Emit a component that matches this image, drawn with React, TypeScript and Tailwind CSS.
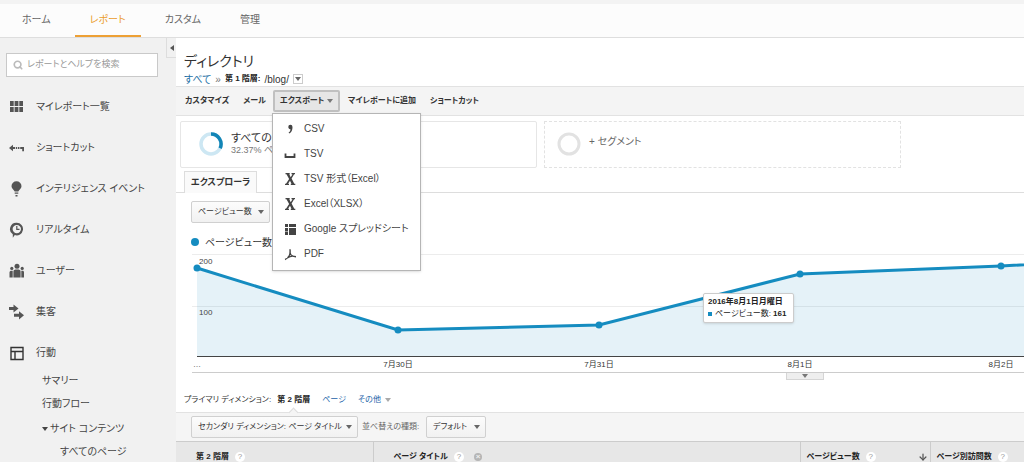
import type { ReactNode } from "react";
import clsx from "clsx";
import { ArrowDown, Search } from "lucide-react";

const tabs = ["ホーム", "レポート", "カスタム", "管理"];

const points = [
  { x: 21, y: 18, label: "…" },
  { x: 222, y: 80, label: "7月30日" },
  { x: 423, y: 75, label: "7月31日" },
  { x: 624, y: 24, label: "8月1日" },
  { x: 825, y: 16, label: "8月2日" },
  { x: 1026, y: 5 },
];

const BASELINE = 106;

function Caret({ className }: { className?: string }) {
  return (
    <svg viewBox="0 0 6 4" className={clsx("h-1 w-1.5 shrink-0", className)} fill="currentColor">
      <path d="M0 0h6L3 4z" />
    </svg>
  );
}

function Icon({ children }: { children: ReactNode }) {
  return (
    <svg viewBox="0 0 16 16" className="h-4 w-4 shrink-0" fill="currentColor">
      {children}
    </svg>
  );
}

const menu = [
  {
    label: "マイレポート一覧",
    icon: <path d="M2 2h3.700v5H2zM6.600 2h3.800v5H6.600zM11.300 2H15v5h-3.700zM2 8h3.700v5H2zM6.600 8h3.800v5H6.600zM11.300 8H15v5h-3.700z" />,
  },
  {
    label: "ショートカット",
    icon: <path d="M1 8 5 4.700V7h2v2H5v2.300zM7.800 7h1.400v2H7.800zM10 7h1.400v2H10zM12.200 7H16v4.200h-1.800V9h-2z" />,
  },
  {
    label: "インテリジェンス イベント",
    icon: (
      <path d="M8.500 .3a5 5 0 0 1 5 5c0 2.300-2.300 3.500-3.200 5.200H6.700C5.800 8.800 3.500 7.600 3.500 5.300a5 5 0 0 1 5-5zM6.700 11.500h3.600v1.300H6.700zM7.500 14h2v1.600h-2z" />
    ),
  },
  {
    label: "リアルタイム",
    icon: (
      <>
        <path
          fillRule="evenodd"
          d="M8.800.8a6.300 6.300 0 1 1-2 12.300L4.800 15.800V12.300A6.300 6.300 0 0 1 8.800.8zm0 2.100a4.200 4.200 0 1 0 0 8.400 4.200 4.200 0 0 0 0-8.400z"
        />
        <path d="M8.800 4v3.400h2.700" fill="none" stroke="currentColor" strokeWidth="1.200" />
      </>
    ),
  },
  {
    label: "ユーザー",
    icon: (
      <>
        <circle cx="9" cy="3.300" r="2.500" />
        <circle cx="3.800" cy="5.400" r="1.600" />
        <circle cx="14.200" cy="5.400" r="1.600" />
        <path d="M5.400 14.500V8.500c0-1.400 1.100-2 3.600-2s3.600.6 3.600 2v6zM1.500 14.500V9.500c0-1.200.8-1.700 2-1.700h1.200v6.700zM16 14.500V9.500c0-1.200-.5-1.700-1.500-1.700h-1.200v6.700z" />
      </>
    ),
  },
  {
    label: "集客",
    icon: <path d="M1 3h4.500V.4l5 4.100-5 4.100V6H1zM6 9.800h5V7.200l5 4.100-5 4.100v-2.600H6z" />,
  },
  {
    label: "行動",
    icon: <path d="M3 2.500h12v12H3zM3 6.500h12M7 6.500v8" fill="none" stroke="#333" strokeWidth="1.400" />,
  },
];

const excelIcon = (
  <path d="M3.500 2h4.200v1.200H7.300L8.700 6.200 10.500 3.200H9.500V2H13v1.200h-.9L9.600 7.600l2.700 5.200h1V14H8.800v-1.200h.7L8 9.700l-2 3.100h1V14H3v-1.200h1l3.100-4.700-2.600-4.900h-1z" />
);

const exports = [
  {
    label: "CSV",
    icon: <path d="M6.300 6a2.100 2.100 0 1 1 4.200-.1c.1 3-1 5.300-3.300 6.600l-.6-.9c1.300-.9 1.800-2 1.900-3.400C7.200 8.300 6.300 7.300 6.300 6z" />,
  },
  {
    label: "TSV",
    icon: <path d="M3.500 7.500V11h9V7.500" fill="none" stroke="currentColor" strokeWidth="1.800" />,
  },
  { label: "TSV 形式（Excel）", icon: excelIcon },
  { label: "Excel（XLSX）", icon: excelIcon },
  {
    label: "Google スプレッドシート",
    icon: <path d="M3 3h3v3H3zM7 3h7v3H7zM3 7h3v3.500H3zM7 7h7v3.500H7zM3 11h3v3H3zM7 10.500h7V14H7z" />,
  },
  {
    label: "PDF",
    icon: (
      <path
        d="M8 3.200C8.300 6 8 8 7.500 9.300M8.100 6.500C8.300 9 11 10.700 14 10.800M7.500 9.300C6.500 11.300 4.800 13 3 13.500M5.300 11.900C7.500 10.500 9.500 10 11.500 10.200"
        fill="none"
        stroke="currentColor"
        strokeWidth="1.400"
      />
    ),
  },
];

function Header() {
  return (
    <header className="border-t-4 border-b border-t-[#f3f3f3] border-b-[#dedede] bg-[#fcfcfc]">
      <nav className="flex h-[33px] gap-[9px] pl-[7px]">
        {tabs.map((tab) => (
          <a
            key={tab}
            href="#"
            className={clsx(
              "flex items-center border-b-2 px-[15px] text-[10px]",
              tab === "レポート" ? "border-[#eda035] text-[#eb9d2c]" : "border-transparent text-[#666]"
            )}
          >
            {tab}
          </a>
        ))}
      </nav>
    </header>
  );
}

function Sidebar() {
  return (
    <aside className="w-44 shrink-0 bg-[#f1f1f1]">
      <div className="flex justify-between pl-1.5">
        <label className="mt-[15px] flex h-6 w-[152px] items-center gap-1 border border-[#c9c9c9] bg-white pl-1.5">
          <Search size={10} strokeWidth={4} className="shrink-0 text-[#bbb]" />
          <input
            type="search"
            aria-label="検索"
            placeholder="レポートとヘルプを検索"
            className="w-full min-w-0 text-[9px] outline-none placeholder:text-[#999]"
          />
        </label>
        <button
          aria-label="閉じる"
          className="flex h-5 w-2.5 items-center justify-center border border-t-0 border-r-0 border-[#ddd] text-[#555]"
        >
          <Caret className="rotate-90" />
        </button>
      </div>
      <ul className="mt-[9px]">
        {menu.map((item) => (
          <li key={item.label}>
            <a href="#" className="flex h-[41px] items-center gap-3 pl-2 text-[10px] text-[#444]">
              <span className="text-[#555]">
                <Icon>{item.icon}</Icon>
              </span>
              {item.label}
            </a>
          </li>
        ))}
      </ul>
      <ul className="-mt-1 text-[10px] leading-[23px] text-[#444]">
        <li className="pl-[42px]">
          <a href="#">サマリー</a>
        </li>
        <li className="pl-[42px]">
          <a href="#">行動フロー</a>
        </li>
        <li className="pt-0.5 pl-[42px]">
          <a href="#" className="flex items-center gap-0.5">
            <Caret />
            サイト コンテンツ
          </a>
        </li>
        <li className="pl-[60px]">
          <a href="#">すべてのページ</a>
        </li>
      </ul>
    </aside>
  );
}

function Toolbar() {
  return (
    <div className="flex h-[30px] items-center border-y border-[#e2e2e2] bg-[#f4f4f4] pl-[9px] text-[8px] font-bold whitespace-nowrap text-[#333]">
      <button className="mr-3.5">カスタマイズ</button>
      <button className="mr-[7px]">メール</button>
      <div className="relative">
        <button className="flex h-[22px] w-[67px] items-center justify-between rounded-xs border-2 border-[#c0c0c0] bg-[#e6e6e6] px-[5px]">
          エクスポート
          <Caret className="text-[#777]" />
        </button>
        <ul className="absolute top-full -left-px z-10 mt-px w-[149px] border border-[#b5b5b5] bg-white pt-0.5 pb-1 font-normal shadow-sm">
          {exports.map((item) => (
            <li key={item.label}>
              <button className="flex h-[25px] w-full items-center gap-1.5 pl-[9px] text-[10px] text-[#444]">
                <Icon>{item.icon}</Icon>
                {item.label}
              </button>
            </li>
          ))}
        </ul>
      </div>
      <button className="ml-2">マイレポートに追加</button>
      <button className="ml-3.5">ショートカット</button>
    </div>
  );
}

function Segments() {
  return (
    <div className="flex gap-[7px] pt-[5px] pl-1">
      <div className="flex h-[47px] w-[357px] gap-2 rounded-xs border border-[#e6e6e6] pt-2.5 pl-[18px]">
        <svg viewBox="0 0 24 24" className="h-6 w-6" fill="none" strokeWidth="3.500">
          <circle cx="12" cy="12" r="10" stroke="#cde7f3" />
          <path d="M12 2a10 10 0 0 1 9.100 14.200" stroke="#1285b6" />
        </svg>
        <div>
          <p className="text-[11px] leading-3 text-[#333]">すべての</p>
          <p className="text-[9px] leading-3 text-[#777]">32.37% ペー</p>
        </div>
      </div>
      <button className="flex h-[47px] w-[357px] gap-2 border border-dashed border-[#e2e2e2] pt-2.5 pl-3 text-[10px] text-[#666]">
        <svg viewBox="0 0 24 24" className="h-6 w-6" fill="none">
          <circle cx="12" cy="12" r="10" stroke="#e2e2e2" strokeWidth="3" />
        </svg>
        <span className="leading-5">+ セグメント</span>
      </button>
    </div>
  );
}

function Select({ id, label, value, className }: { id: string; label?: string; value: string; className: string }) {
  return (
    <div className={clsx("relative", className)}>
      <select
        id={id}
        aria-label={label}
        className="block h-[22px] w-full appearance-none rounded-xs border border-[#d0d0d0] bg-linear-to-b from-[#fcfcfc] to-[#f1f1f1] pl-1.5 text-[8px] text-[#333]"
      >
        <option>{value}</option>
      </select>
      <Caret className="pointer-events-none absolute top-[9px] right-1.5 text-[#666]" />
    </div>
  );
}

function Chart() {
  const line = points.map((p) => `${p.x},${p.y}`).join(" ");

  return (
    <div className="relative">
      <svg className="block h-[122px] w-full text-[8px]">
        <path d="M16 4.500H2000M16 56.500H2000" stroke="#ececec" />
        <polygon points={`21,${BASELINE} ${line} 1026,${BASELINE}`} fill="#0f86bd" fillOpacity="0.110" />
        <path d="M21 106.500H2000" stroke="#444" />
        <polyline points={line} fill="none" stroke="#158cc0" strokeWidth="3" />
        {points.map((p) => (
          <g key={p.x}>
            <circle cx={p.x} cy={p.y} r="3.500" fill="#158cc0" />
            {p.label && (
              <text x={p.x} y="117" textAnchor="middle" fill="#333">
                {p.label}
              </text>
            )}
          </g>
        ))}
        <g fill="#444">
          <text x="23" y="14">
            200
          </text>
          <text x="23" y="65">
            100
          </text>
        </g>
      </svg>
      <div className="absolute top-[43px] left-[527px] w-[91px] rounded-xs border border-[#ccc] bg-white px-1 py-0.5 text-[8px] leading-3 whitespace-nowrap text-[#222] shadow-sm">
        <p className="font-bold">2016年8月1日月曜日</p>
        <p className="flex items-center gap-[3px]">
          <span className="h-1 w-1 bg-[#158cc0]" />
          <span>
            ページビュー数: <b>161</b>
          </span>
        </p>
      </div>
      <div className="ml-4 border-t border-[#ccc]">
        <button
          aria-label="注釈"
          className="ml-[594px] flex h-[7px] w-[38px] items-center justify-center border border-t-0 border-[#d5d5d5] bg-[#eee] text-[#777]"
        >
          <Caret />
        </button>
      </div>
    </div>
  );
}

function Help() {
  return (
    <span className="flex h-2.5 w-2.5 items-center justify-center rounded-full bg-white text-[8px] leading-none font-normal text-[#999]">
      ?
    </span>
  );
}

function DataTable() {
  return (
    <table className="w-full table-fixed border-t border-[#ccc] bg-[#e7e7e7] text-left text-[8px] text-[#222]">
      <thead>
        <tr className="h-[30px]">
          <th className="w-[197px] border-r border-[#ccc] pl-5">
            <span className="flex items-center gap-1.5">
              第 2 階層 <Help />
            </span>
          </th>
          <th className="w-[427px] border-r border-[#ccc] pl-5">
            <span className="flex items-center gap-1.5">
              ページ タイトル <Help />
              <span className="ml-1 flex h-2 w-2 items-center justify-center rounded-full bg-[#b5b5b5] text-[8px] leading-none text-[#eee]">
                ×
              </span>
            </span>
          </th>
          <th className="w-[130px] border-r border-[#ccc] pr-0.5 pl-1.5">
            <span className="flex items-center gap-1.5">
              ページビュー数 <Help />
              <ArrowDown size={10} strokeWidth={3} className="ml-auto text-[#555]" />
            </span>
          </th>
          <th className="pl-1.5">
            <span className="flex items-center gap-1.5 whitespace-nowrap">
              ページ別訪問数 <Help />
            </span>
          </th>
        </tr>
      </thead>
    </table>
  );
}

function Report() {
  return (
    <main className="min-w-0 flex-1 bg-white">
      <div className="pt-3 pl-2">
        <h1 className="text-sm leading-[22px] text-[#333]">ディレクトリ</h1>
        <div className="flex h-3.5 items-center gap-1 text-[10px]">
          <a href="#" className="text-[#1d6fa5]">
            すべて
          </a>
          <span className="text-[#777]">»</span>
          <b className="text-[8px] text-[#222]">第 1 階層:</b>
          <span className="text-[#333]">/blog/</span>
          <button
            aria-label="階層を選択"
            className="flex h-2.5 w-2.5 items-center justify-center border border-[#ccc] text-[#666]"
          >
            <Caret />
          </button>
        </div>
      </div>
      <Toolbar />
      <Segments />

      <div className="flex border-b border-[#ddd] pt-[3px] pl-2">
        <button className="-mb-px h-[22px] border border-b-0 border-[#ddd] bg-[#fafafa] px-1.5 text-[9px] font-bold text-[#333]">
          エクスプローラ
        </button>
      </div>

      <div className="pt-2 pl-[15px]">
        <Select id="metric" label="指標" value="ページビュー数" className="w-[79px]" />
        <p className="mt-[11px] flex h-4 items-center gap-1.5 text-[10px] text-[#333]">
          <span className="h-2 w-2 rounded-full bg-[#158cc0]" />
          ページビュー数
        </p>
      </div>
      <Chart />

      <div className="flex h-8 items-center gap-3 pt-2 pl-2 text-[8px]">
        <span className="text-[#333]">
          プライマリ ディメンション: <b className="ml-1 text-[#222]">第 2 階層</b>
        </span>
        <a href="#" className="text-[#1a5fa8]">
          ページ
        </a>
        <a href="#" className="flex items-center gap-1 text-[#1a5fa8]">
          その他
          <Caret className="text-[#aaa]" />
        </a>
      </div>
      <div className="relative flex h-[29px] items-center gap-1 border-t border-[#e2e2e2] bg-[#f5f5f5] pl-[15px]">
        <span className="absolute -top-1 left-[114px] h-[7px] w-[7px] rotate-45 border-t border-l border-[#ddd] bg-[#f5f5f5]" />
        <Select
          id="secondary"
          label="セカンダリ ディメンション"
          value="セカンダリ ディメンション: ページ タイトル"
          className="w-[167px]"
        />
        <label htmlFor="sort" className="w-[60px] text-[8px] whitespace-nowrap text-[#666]">
          並べ替えの種類:
        </label>
        <Select id="sort" value="デフォルト" className="w-[60px]" />
      </div>
      <DataTable />
    </main>
  );
}

export default function App() {
  return (
    <div className="flex h-screen flex-col overflow-hidden bg-white font-['Liberation_Sans','Noto_Sans_CJK_JP',sans-serif] [font-feature-settings:'palt']">
      <Header />
      <div className="flex min-h-0 flex-1">
        <Sidebar />
        <Report />
      </div>
    </div>
  );
}
